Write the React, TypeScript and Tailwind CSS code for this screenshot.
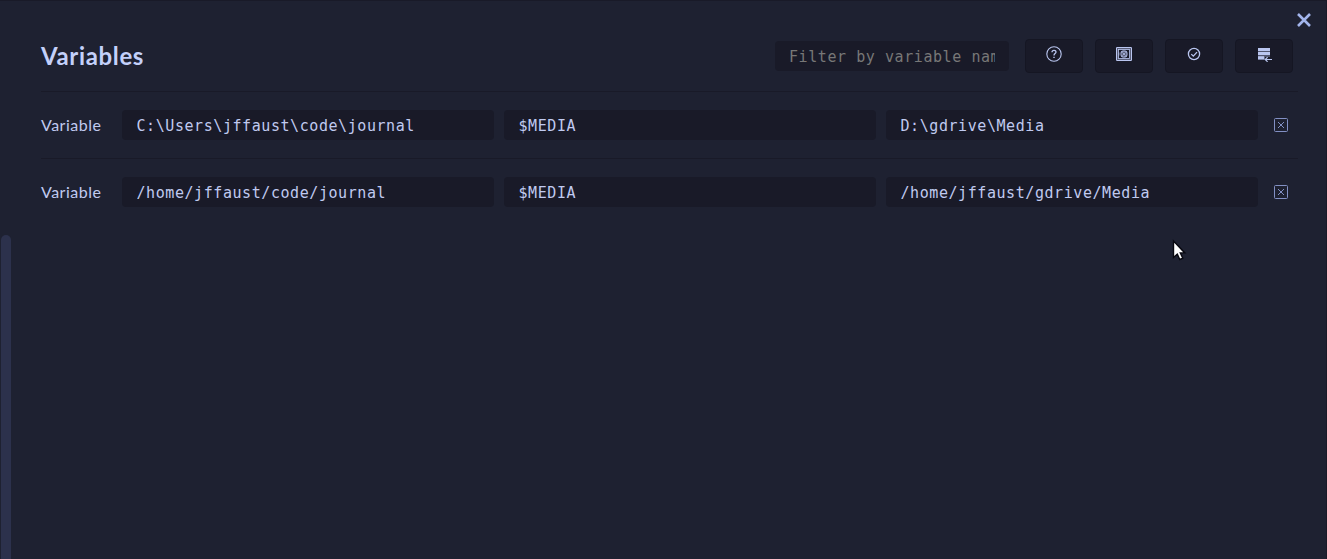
import React from "react";

const mono = "font-['DejaVu_Sans_Mono',monospace] text-[15px] tracking-[0.569px]";

const rows = [
  ["C:\\Users\\jffaust\\code\\journal", "$MEDIA", "D:\\gdrive\\Media"],
  ["/home/jffaust/code/journal", "$MEDIA", "/home/jffaust/gdrive/Media"],
];

function HelpIcon() {
  return (
    <svg width="16" height="16" viewBox="0 0 16 16" fill="none" stroke="currentColor">
      <circle cx="8" cy="8" r="7.2" strokeWidth="1.1" />
      <path d="M6 6.3C6 4.9 6.8 4.3 8 4.3s2 .7 2 1.8C10 7.6 8 7.5 8 9.4" strokeWidth="1.3" />
      <path d="M8 10.7v1.3" strokeWidth="1.4" />
    </svg>
  );
}

function SafeIcon() {
  return (
    <svg width="16" height="16" viewBox="0 0 16 16" fill="none" stroke="currentColor">
      <rect x="1.3" y="2.3" width="13.4" height="11.4" strokeWidth="2.4" strokeOpacity="0.4" />
      <rect x="0.5" y="1.5" width="15" height="13" rx="0.5" strokeWidth="1" />
      <rect x="2.5" y="3.5" width="11" height="9" strokeWidth="0.8" />
      <circle cx="8" cy="8" r="3" strokeWidth="1.3" strokeOpacity="0.8" />
      <circle cx="8" cy="8" r="1.2" strokeWidth="0.9" />
      <path d="M5.2 5.2l5.6 5.6M10.8 5.2l-5.6 5.6M3 6.5v3" strokeWidth="0.6" />
    </svg>
  );
}

function CheckIcon() {
  return (
    <svg width="16" height="16" viewBox="0 0 16 16" fill="none" stroke="currentColor" strokeWidth="1.3">
      <circle cx="8" cy="8" r="5.6" />
      <path d="M5.3 8.1l2 2 3.7-4" />
    </svg>
  );
}

function ListBackIcon() {
  return (
    <svg width="16" height="16" viewBox="0 0 16 16" fill="none" stroke="currentColor">
      <path d="M2 2h12v9H9v3H2z" fill="currentColor" fillOpacity="0.35" stroke="none" />
      <path d="M2 3.5h12M2 7.5h12" strokeWidth="3" />
      <path d="M2 11.8h6.2" strokeWidth="3.2" />
      <path d="M16 13.5H9.3M11.6 11.2l-2.3 2.3 2.3 2.3" strokeWidth="1.2" />
    </svg>
  );
}

function DeleteIcon() {
  return (
    <svg width="14" height="14" viewBox="0 0 14 14" fill="none" stroke="currentColor" strokeWidth="1">
      <rect x="0.5" y="0.5" width="13" height="13" rx="1" />
      <path d="M4 4l6 6M10 4l-6 6" />
    </svg>
  );
}

function ToolButton({ label, children }: { label: string; children: React.ReactNode }) {
  return (
    <button
      aria-label={label}
      className="flex h-[34px] w-[58px] items-center justify-center rounded-[4px] border border-[#151623] bg-[#191a28] pb-1 text-[#bac6f0]"
    >
      {children}
    </button>
  );
}

export default function App() {
  return (
    <div className="relative h-[559px] w-[1327px] overflow-hidden border-t border-r border-[#191a28] bg-[#1e2131] font-['Lato',sans-serif] text-[#c0caf0]">
      <div className="ml-[41px] w-[1257px]">
        <header className="flex h-[91px] items-center border-b border-[#191a28] pt-[19px] pr-[5px]">
          <h1 className="flex-1 text-2xl font-bold leading-[34px] tracking-[0.65px] text-[#c3d0fa]">Variables</h1>
          <input
            placeholder="Filter by variable name"
            className={`${mono} mr-4 h-[30px] w-[234px] rounded-[4px] bg-[#191a28] px-3.5 pt-0.5 placeholder-[#777777] outline-none`}
          />
          <div className="flex gap-3">
            <ToolButton label="Help"><HelpIcon /></ToolButton>
            <ToolButton label="Vault"><SafeIcon /></ToolButton>
            <ToolButton label="Validate"><CheckIcon /></ToolButton>
            <ToolButton label="Add"><ListBackIcon /></ToolButton>
          </div>
        </header>
        {rows.map((row, i) => (
          <div key={i} className="flex h-[67px] items-center border-b border-[#191a28] last:border-transparent">
            <span className="w-[81px] text-base tracking-[0.5px]">Variable</span>
            <div className="flex gap-2.5">
              {row.map((value, j) => (
                <input
                  key={j}
                  defaultValue={value}
                  className={`${mono} h-[30px] w-[372px] rounded-[4px] bg-[#191a28] pt-0.5 pr-3.5 pl-[14.5px] outline-none`}
                />
              ))}
            </div>
            <button aria-label="Delete" className="ml-4 text-[#8290c4]"><DeleteIcon /></button>
          </div>
        ))}
      </div>
      <button aria-label="Close" className="absolute left-[1297px] top-[12px] text-[#a3b5ec]">
        <svg width="14" height="14" viewBox="0 0 14 14" fill="none" stroke="currentColor" strokeWidth="2.6">
          <path d="M1 1l12 12M13 1L1 13" />
        </svg>
      </button>
      <div className="absolute left-px top-[234px] h-[340px] w-2.5 rounded-full bg-[#2c314c]" />
      <svg className="absolute left-[1172px] top-[238px]" width="15" height="23" viewBox="0 0 15 23">
        <path d="M1.5 2v16.5l3.8-3.4 2.5 5.4 3-1.4-2.5-5.2h4.5z" fill="#fff" stroke="#080810" strokeWidth="1.4" />
      </svg>
    </div>
  );
}
